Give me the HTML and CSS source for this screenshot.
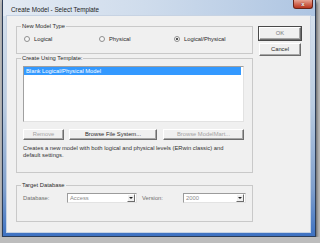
FILE: index.html
```html
<!DOCTYPE html>
<html>
<head>
    <title>Create Model - Select Template</title>
    <link rel="stylesheet" href="styles.css">
</head>
<body>
    <div class="window">
        <div class="titlebar">
            <span class="title">Create Model - Select Template</span>
            <span class="close">x</span>
        </div>
        <div class="client">
            <div class="main">
                <fieldset class="group type-group">
                    <legend>New Model Type</legend>
                    <div class="radios">
                        <label class="radio"><span class="dot"></span>Logical</label>
                        <label class="radio"><span class="dot"></span>Physical</label>
                        <label class="radio"><span class="dot checked"></span>Logical/Physical</label>
                    </div>
                </fieldset>

                <fieldset class="group template-group">
                    <legend>Create Using Template:</legend>
                    <div class="listbox">
                        <div class="item selected">Blank Logical/Physical Model</div>
                    </div>
                    <div class="button-row">
                        <button class="btn btn-remove" disabled>Remove</button>
                        <button class="btn btn-browse">Browse File System...</button>
                        <button class="btn btn-mart" disabled>Browse ModelMart...</button>
                    </div>
                    <p class="desc">Creates a new model with both logical and physical levels (ERwin classic) and<br>default settings.</p>
                </fieldset>

                <fieldset class="group db-group">
                    <legend>Target Database</legend>
                    <div class="db-row">
                        <span class="field-label db-label">Database:</span>
                        <div class="combo db-combo"><span class="combo-value">Access</span><span class="combo-arrow"></span></div>
                        <span class="field-label ver-label">Version:</span>
                        <div class="combo ver-combo"><span class="combo-value">2000</span><span class="combo-arrow"></span></div>
                    </div>
                </fieldset>
            </div>

            <div class="side">
                <button class="btn btn-ok">OK</button>
                <button class="btn btn-cancel">Cancel</button>
            </div>
        </div>
    </div>
</body>
</html>
```

FILE: styles.css
```css
body {
    margin: 0;
    background: #bdbdbd;
    font-family: "Liberation Sans", Arial, sans-serif;
    font-size: 5.8px;
    color: #2a2a2a;
    overflow: hidden;
}

.window {
    margin-left: 2px;
    width: 314px;
    height: 237px;
    box-sizing: border-box;
    border: 1px solid #2c3d58;
    border-top: none;
    padding: 0 5px 4px 4px;
    background: linear-gradient(to bottom, #d9e3ee 0%, #b9cbe0 45%, #7f9fcc 80%, #3e72c2 100%);
    box-shadow: 1px 2px 3px rgba(0, 0, 0, 0.55);
}

/* Title bar */
.titlebar {
    display: flex;
    align-items: flex-start;
    height: 16px;
    margin: 0 -5px 0 -4px;
    padding: 0 4px 0 8px;
    background: linear-gradient(to right, #e3eaf3 0%, #cfdcec 45%, #aec5e2 100%);
}

.title {
    padding-top: 6px;
    line-height: 8px;
    font-size: 6.3px;
    color: #1c1c1c;
}

.close {
    margin-left: auto;
    margin-right: -2px;
    width: 20px;
    height: 9px;
    box-sizing: border-box;
    border: 1px solid #6a2418;
    border-top: none;
    border-radius: 0 0 3px 3px;
    background: linear-gradient(to bottom, #e6a595 0%, #d26a55 50%, #b8361f 100%);
    color: #fff;
    font-size: 6px;
    font-weight: bold;
    line-height: 8px;
    text-align: center;
    text-shadow: 0 0 1px #3a0a02;
}

/* Client area */
.client {
    display: flex;
    height: 216px;
    box-sizing: border-box;
    background: #f0f0f0;
    box-shadow: 0 0 0 1px #c7d3e3;
}

.main {
    padding: 6px 0 0 9px;
}

.group {
    margin: 0;
    width: 237px;
    box-sizing: border-box;
    border: 1px solid #c9c9c9;
    padding: 0 6px;
    min-width: 0;
}

.group legend {
    margin-left: -2px;
    padding: 0 1px;
    line-height: 8px;
    color: #2a2a2a;
}

.type-group {
    padding-top: 5px;
    padding-bottom: 10px;
}

.template-group {
    padding-top: 4px;
    padding-bottom: 13px;
}

.db-group {
    margin-top: 8px;
    padding-top: 4px;
    padding-bottom: 18px;
}

/* Radios */
.radios {
    display: grid;
    grid-template-columns: 75px 75px 75px;
    margin-left: 1px;
    height: 8px;
}

.radio {
    display: flex;
    align-items: center;
    gap: 4px;
    line-height: 8px;
}

.dot {
    width: 6px;
    height: 6px;
    box-sizing: border-box;
    border: 1px solid #8f8f8f;
    border-radius: 50%;
    background: #f7f7f7;
    display: flex;
    align-items: center;
    justify-content: center;
}

.dot.checked::after {
    content: "";
    width: 2px;
    height: 2px;
    border-radius: 50%;
    background: #1f1f1f;
}

/* Template list */
.listbox {
    width: 221px;
    height: 56px;
    box-sizing: border-box;
    border: 1px solid;
    border-color: #a0a0a0 #e2e2e2 #e2e2e2 #a0a0a0;
    background: #fff;
    padding-right: 2px;
}

.item {
    height: 8px;
    line-height: 8px;
    padding-left: 2px;
}

.item.selected {
    background: #3399ff;
    color: #fff;
}

.button-row {
    display: flex;
    margin-top: 7px;
}

.btn {
    height: 11px;
    box-sizing: border-box;
    margin: 0;
    padding: 0;
    font-family: inherit;
    font-size: 5.8px;
    line-height: 9px;
    color: #2a2a2a;
    background: #f0f0f0;
    border: 1px solid;
    border-color: #ffffff #6d6d6d #6d6d6d #ffffff;
    box-shadow: inset -1px -1px 0 #a6a6a6;
    border-radius: 0;
}

.btn:disabled {
    color: #a3a3a3;
}

.btn-remove {
    width: 41px;
}

.btn-browse {
    width: 88px;
    margin-left: 5px;
}

.btn-mart {
    width: 81px;
    margin-left: 6px;
}

.desc {
    margin: 5px 0 0;
    line-height: 7px;
    white-space: nowrap;
    color: #333;
}

/* Target database */
.db-row {
    display: flex;
    align-items: center;
    height: 10px;
}

.field-label {
    color: #6f6f6f;
}

.db-label {
    width: 44px;
}

.ver-label {
    width: 41px;
    margin-left: 5px;
}

.combo {
    display: flex;
    align-items: center;
    height: 10px;
    box-sizing: border-box;
    border: 1px solid;
    border-color: #9c9c9c #e3e3e3 #e3e3e3 #9c9c9c;
    background: #fff;
    padding: 1px;
}

.db-combo {
    width: 70px;
}

.ver-combo {
    width: 63px;
}

.combo-value {
    flex: 1;
    padding-left: 1px;
    color: #8c8c8c;
    line-height: 8px;
}

.combo-arrow {
    width: 8px;
    height: 8px;
    box-sizing: border-box;
    background: #f0f0f0;
    border: 1px solid;
    border-color: #ffffff #6d6d6d #6d6d6d #ffffff;
    display: flex;
    align-items: center;
    justify-content: center;
}

.combo-arrow::after {
    content: "";
    border-left: 2px solid transparent;
    border-right: 2px solid transparent;
    border-top: 2px solid #222;
}

/* OK / Cancel */
.side {
    display: flex;
    flex-direction: column;
    gap: 3px;
    margin: 11px 0 0 6px;
}

.side .btn {
    width: 42px;
    height: 13px;
    line-height: 11px;
}

.btn-ok {
    color: #7a7a7a;
    outline: 1px solid #4a4a4a;
    outline-offset: 0;
}
```
